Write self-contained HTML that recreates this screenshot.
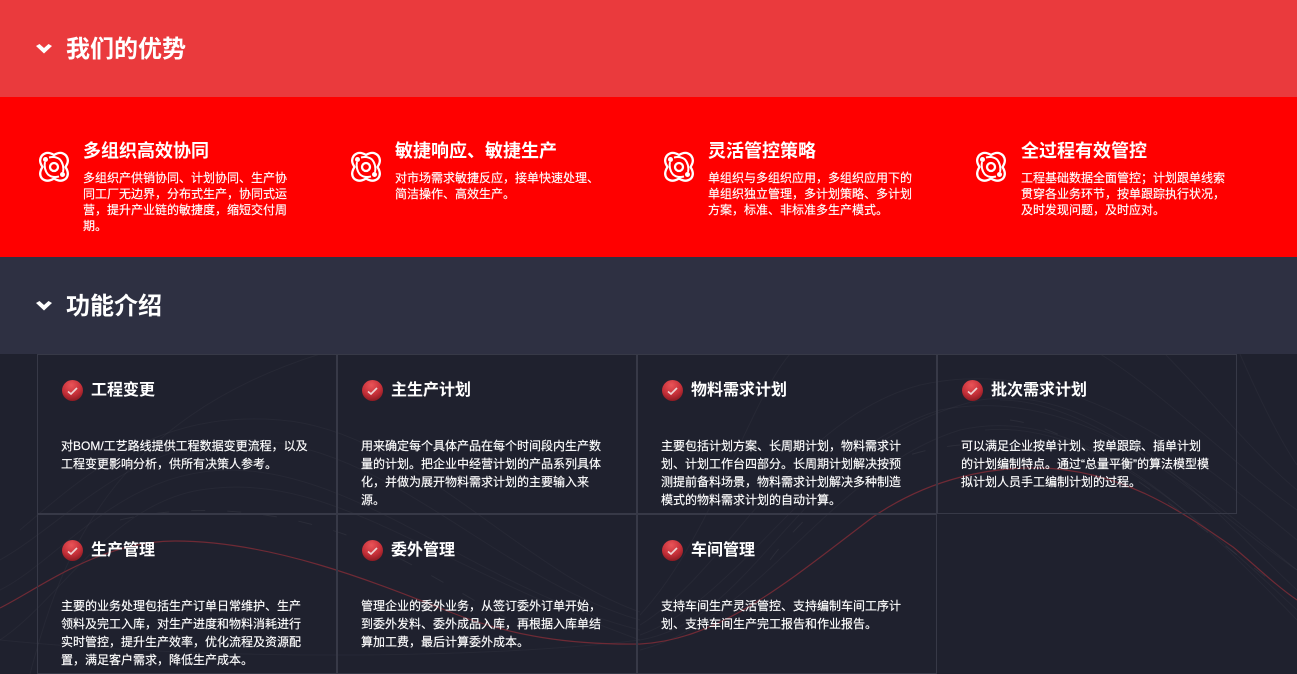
<!DOCTYPE html>
<html lang="zh"><head><meta charset="utf-8"><title>我们的优势</title>
<style>
html,body{margin:0;padding:0}
body{width:1297px;height:674px;overflow:hidden;position:relative;background:#1f212e;color:#fff;font-family:"Liberation Sans","Noto Sans CJK SC",sans-serif}
.band{position:absolute;left:0;width:1297px}
.h{position:absolute;left:66px;font-size:24px;font-weight:700;line-height:34px;white-space:nowrap}
.chev{position:absolute;left:36px;width:16px;height:11px}
.ic{position:absolute;top:151px;width:32px;height:32px}
.at{position:absolute;top:138px;font-size:18px;font-weight:700;line-height:26px;white-space:nowrap}
.ad{position:absolute;top:170px;font-size:12px;line-height:16px;white-space:nowrap;-webkit-text-stroke:.15px #fff}
.cell{position:absolute;width:300px;height:160px;box-sizing:border-box;border:1px solid #373947}
.ball{position:absolute;left:24px;top:25px;width:21px;height:21px}
.ct{position:absolute;left:53px;top:24px;font-size:16px;font-weight:700;line-height:24px;white-space:nowrap}
.cd{position:absolute;left:23px;top:82px;font-size:12px;line-height:18px;white-space:nowrap;-webkit-text-stroke:.15px #fff}
svg.bg{position:absolute;left:0;top:354px}
</style></head><body>
<div class="band" style="top:0;height:97px;background:#ea3a3d"></div>
<div class="band" style="top:97px;height:160px;background:#ff0000"></div>
<div class="band" style="top:257px;height:97px;background:#2e3042"></div>

<svg class="chev" style="top:43px" viewBox="0 0 16 11"><path d="M0 3L3.500 1L8 5L12.500 1L16 3L8 10.500Z" fill="#fff"/></svg>
<div class="h" style="top:33px">我们的优势</div>
<svg class="chev" style="top:300px" viewBox="0 0 16 11"><path d="M0 3L3.500 1L8 5L12.500 1L16 3L8 10.500Z" fill="#fff"/></svg>
<div class="h" style="top:290px">功能介绍</div>

<svg width="0" height="0" style="position:absolute"><defs>
<g id="atom" fill="none" stroke="#fff" stroke-width="2.300">
<path d="M4 4.500C8 .500 12 1.500 16 4C20 1.500 24 .500 28 4.500C31 8.500 30 12 27.500 16C30 20 31 24 28 27.500C24 31 20 30 16 27.500C12 30 8 31 4 27.500C1 24 2 20 4.500 16C2 12 1 8.500 4 4.500Z"/>
<circle cx="16" cy="16" r="4"/>
<path d="M7 11C6 15 7 20 10 23.500C13 26 17 26.500 21 25.500" stroke-width="2"/>
<path d="M25 21C26 17 25 12 22 8.500C19 6 15 5.500 11 6.500" stroke-width="2"/>
<circle cx="7.500" cy="8.500" r="2.500" fill="#fff" stroke="none"/>
<circle cx="24.500" cy="23.500" r="2.500" fill="#fff" stroke="none"/>
</g>
<radialGradient id="rb" cx="45%" cy="25%" r="85%"><stop offset="0" stop-color="#ea5458"/><stop offset=".55" stop-color="#c42f38"/><stop offset="1" stop-color="#7a141b"/></radialGradient>
<g id="ball"><circle cx="10.500" cy="10.500" r="10.500" fill="url(#rb)"/><path d="M6 11.500L9 14L15 8" fill="none" stroke="#eed5d5" stroke-width="1.700"/></g>
</defs></svg>

<svg class="ic" style="left:38px" viewBox="0 0 32 32"><use href="#atom"/></svg>
<div class="at" style="left:83px">多组织高效协同</div>
<div class="ad" style="left:83px">多组织产供销协同、计划协同、生产协<br>同工厂无边界，分布式生产，协同式运<br>营，提升产业链的敏捷度，缩短交付周<br>期。</div>

<svg class="ic" style="left:350px" viewBox="0 0 32 32"><use href="#atom"/></svg>
<div class="at" style="left:395px">敏捷响应、敏捷生产</div>
<div class="ad" style="left:395px">对市场需求敏捷反应，接单快速处理、<br>简洁操作、高效生产。</div>

<svg class="ic" style="left:663px" viewBox="0 0 32 32"><use href="#atom"/></svg>
<div class="at" style="left:708px">灵活管控策略</div>
<div class="ad" style="left:708px">单组织与多组织应用，多组织应用下的<br>单组织独立管理，多计划策略、多计划<br>方案，标准、非标准多生产模式。</div>

<svg class="ic" style="left:975px" viewBox="0 0 32 32"><use href="#atom"/></svg>
<div class="at" style="left:1021px">全过程有效管控</div>
<div class="ad" style="left:1021px">工程基础数据全面管控；计划跟单线索<br>贯穿各业务环节，按单跟踪执行状况，<br>及时发现问题，及时应对。</div>

<svg class="bg" width="1297" height="320" viewBox="0 354 1297 320" fill="none">
<g stroke="#fff" stroke-opacity=".035">
<path d="M0 640C60 600 110 505 200 490C330 470 420 560 640 640"/>
<path d="M0 590C60 560 120 470 230 470C360 470 480 590 640 630"/>
<path d="M0 560C70 520 130 440 250 440C390 445 500 580 640 620"/>
<path d="M20 530C90 470 160 410 280 420C410 430 520 570 640 612"/>
<path d="M30 674C60 560 110 420 320 354"/>
<path d="M0 640C200 660 480 660 640 640C760 620 800 440 980 400C1110 380 1220 520 1297 590"/>
<path d="M640 650C760 620 830 470 960 430C1090 400 1210 530 1297 620"/>
<path d="M640 635C740 600 810 450 940 410C1090 380 1220 510 1297 570"/>
<path d="M640 625C730 570 790 420 920 385C1080 350 1210 470 1297 540"/>
<path d="M640 615C710 540 750 400 790 354"/>
<path d="M1240 354C1260 400 1280 440 1297 465"/>
<path d="M1165 354C1210 400 1260 460 1297 490"/>
<path d="M1100 354C1160 390 1240 470 1297 510"/>
<path d="M1000 400C1100 400 1210 510 1297 570"/>
<path d="M985 430C1100 420 1210 530 1297 610"/>
</g>
<g stroke="#fff" stroke-opacity=".055" stroke-dasharray="14 22">
<path d="M120 520C180 505 270 505 360 540C420 565 470 600 510 620"/>
<path d="M770 560C830 480 900 450 960 445"/>
<path d="M1010 420C1090 430 1200 530 1297 600"/>
</g>
<path d="M0 608C40 588 100 541 175 541C270 541 370 580 450 612C510 636 570 645 640 644C720 640 790 580 873 517C930 478 990 467 1040 468C1120 470 1180 510 1233 547C1255 565 1275 585 1297 600" stroke="#6f2a35" stroke-width="1.200"/>
</svg>

<div class="cell" style="left:37px;top:354px"><svg class="ball" viewBox="0 0 21 21"><use href="#ball"/></svg><div class="ct">工程变更</div><div class="cd">对BOM/工艺路线提供工程数据变更流程，以及<br>工程变更影响分析，供所有决策人参考。</div></div>
<div class="cell" style="left:337px;top:354px"><svg class="ball" viewBox="0 0 21 21"><use href="#ball"/></svg><div class="ct">主生产计划</div><div class="cd">用来确定每个具体产品在每个时间段内生产数<br>量的计划。把企业中经营计划的产品系列具体<br>化，并做为展开物料需求计划的主要输入来<br>源。</div></div>
<div class="cell" style="left:637px;top:354px"><svg class="ball" viewBox="0 0 21 21"><use href="#ball"/></svg><div class="ct">物料需求计划</div><div class="cd">主要包括计划方案、长周期计划，物料需求计<br>划、计划工作台四部分。长周期计划解决按预<br>测提前备料场景，物料需求计划解决多种制造<br>模式的物料需求计划的自动计算。</div></div>
<div class="cell" style="left:937px;top:354px;width:300px"><svg class="ball" viewBox="0 0 21 21"><use href="#ball"/></svg><div class="ct">批次需求计划</div><div class="cd">可以满足企业按单计划、按单跟踪、插单计划<br>的计划编制特点。通过“总量平衡”的算法模型模<br>拟计划人员手工编制计划的过程。</div></div>
<div class="cell" style="left:37px;top:514px"><svg class="ball" viewBox="0 0 21 21"><use href="#ball"/></svg><div class="ct">生产管理</div><div class="cd">主要的业务处理包括生产订单日常维护、生产<br>领料及完工入库，对生产进度和物料消耗进行<br>实时管控，提升生产效率，优化流程及资源配<br>置，满足客户需求，降低生产成本。</div></div>
<div class="cell" style="left:337px;top:514px"><svg class="ball" viewBox="0 0 21 21"><use href="#ball"/></svg><div class="ct">委外管理</div><div class="cd">管理企业的委外业务，从签订委外订单开始，<br>到委外发料、委外成品入库，再根据入库单结<br>算加工费，最后计算委外成本。</div></div>
<div class="cell" style="left:637px;top:514px"><svg class="ball" viewBox="0 0 21 21"><use href="#ball"/></svg><div class="ct">车间管理</div><div class="cd">支持车间生产灵活管控、支持编制车间工序计<br>划、支持车间生产完工报告和作业报告。</div></div>
</body></html>
